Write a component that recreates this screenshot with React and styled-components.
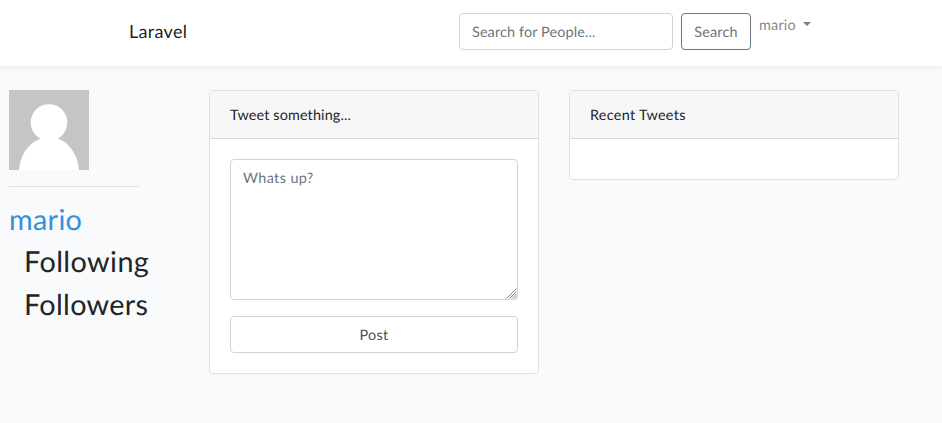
import React from "react";
import styled, { createGlobalStyle } from "styled-components";

const GlobalStyle = createGlobalStyle`
  *, *::before, *::after { box-sizing: border-box; }
  body {
    margin: 0;
    background: #f8fafc;
    color: #212529;
    font-family: Lato, "Noto Sans", sans-serif;
    font-size: 14.4px;
    line-height: 1.6;
    text-rendering: geometricPrecision;
    overflow: hidden;
  }
  input, textarea, button { text-rendering: inherit; }
`;

const Label = styled.span`
  display: inline-block;
  white-space: nowrap;
  letter-spacing: ${(p) => p.$track || 0}px;
`;

const Navbar = styled.nav`
  display: flex;
  align-items: flex-start;
  height: 66px;
  padding: 13px 130px 0 129px;
  background: #fff;
  box-shadow: 0 2px 4px rgba(0, 0, 0, 0.06);
`;

const Brand = styled.a`
  margin-top: 4px;
  font-size: 18px;
  line-height: 29px;
  color: rgba(0, 0, 0, 0.9);
`;

const SearchForm = styled.form`
  display: flex;
  gap: 8px;
  margin-left: auto;
`;

const SearchInput = styled.input`
  width: 214px;
  height: 37px;
  padding: 7px 12px 5px;
  border: 1px solid #ced4da;
  border-radius: 4px;
  background: #fff;
  font: inherit;
  letter-spacing: 0.13px;
  outline: none;
  &::placeholder { color: #6c757d; opacity: 1; }
`;

const Button = styled.button`
  width: ${(p) => (p.$block ? "100%" : "70px")};
  height: 37px;
  padding: 2px 0 0;
  border: 1px solid ${(p) => (p.$block ? "#ced4da" : "#6c757d")};
  border-radius: 4px;
  background: #fff;
  color: ${(p) => (p.$block ? "#495057" : "#6c757d")};
  font: inherit;
`;

const UserMenu = styled.a`
  display: flex;
  align-items: center;
  width: 52px;
  height: 25px;
  margin-left: 8px;
  margin-right: 1px;
  color: rgba(0, 0, 0, 0.5);
`;

const Caret = styled.span`
  margin-left: auto;
  margin-bottom: 3px;
  border-top: 4.3px solid;
  border-left: 4.3px solid transparent;
  border-right: 4.3px solid transparent;
`;

const Page = styled.main`
  display: grid;
  grid-template-columns: 170px 330px 330px;
  column-gap: 30px;
  align-items: start;
  padding: 24px 0 0 9px;
`;

const Profile = styled.aside`
  display: flex;
  flex-direction: column;
  align-items: flex-start;
`;

const Avatar = styled.svg`
  display: block;
  width: 80px;
  height: 80px;
`;

const Divider = styled.hr`
  width: 130px;
  margin: 16px 0 15.5px;
  border: 0;
  border-top: 1px solid rgba(0, 0, 0, 0.1);
`;

const ProfileHeading = styled.h2`
  margin: 0 0 8px;
  padding-left: ${(p) => (p.$link ? 0 : 15)}px;
  font-size: 28.8px;
  font-weight: 400;
  line-height: 34.56px;
  color: ${(p) => (p.$link ? "#3490dc" : "#212529")};
`;

const Card = styled.section`
  border: 1px solid #dfe0e2;
  border-radius: 4px;
  background: #fff;
  overflow: hidden;
`;

const CardHeader = styled.header`
  height: 48px;
  padding: 13px 20px 0;
  border-bottom: 1px solid #d9d9d9;
  background: #f7f7f7;
`;

const CardBody = styled.div`
  display: flex;
  flex-direction: column;
  gap: 16px;
  min-height: 40px;
  padding: 20px;
`;

const TweetField = styled.div`
  position: relative;
`;

const TweetArea = styled.textarea`
  display: block;
  width: 100%;
  height: 141px;
  padding: 7px 12px;
  border: 1px solid #ced4da;
  border-radius: 4px;
  font: inherit;
  letter-spacing: 0.4px;
  resize: none;
  outline: none;
  &::placeholder { color: #6c757d; opacity: 1; }
`;

const ResizeGrip = styled.svg`
  position: absolute;
  right: 1px;
  bottom: 1px;
  width: 11px;
  height: 11px;
  pointer-events: none;
`;

export default function App() {
  return (
    <>
      <GlobalStyle />
      <Navbar>
        <Brand><Label $track={0.3}>Laravel</Label></Brand>
        <SearchForm>
          <SearchInput placeholder="Search for People..." />
          <Button type="button"><Label $track={0.2}>Search</Label></Button>
        </SearchForm>
        <UserMenu><Label $track={0.2}>mario</Label><Caret /></UserMenu>
      </Navbar>
      <Page>
        <Profile>
          <Avatar viewBox="0 0 80 80">
            <rect width="80" height="80" fill="#c5c5c5" />
            <circle cx="40" cy="32.5" r="18.3" fill="#fff" />
            <path d="M10 80C11 66 19 53 31 49Q33 47 31 45H49Q47 47 50 49C61 53 69 66 70 80Z" fill="#fff" />
          </Avatar>
          <Divider />
          <ProfileHeading $link><Label $track={0.3}>mario</Label></ProfileHeading>
          <ProfileHeading><Label $track={0.4}>Following</Label></ProfileHeading>
          <ProfileHeading><Label $track={0.3}>Followers</Label></ProfileHeading>
        </Profile>
        <Card>
          <CardHeader><Label $track={0.14}>Tweet something...</Label></CardHeader>
          <CardBody>
            <TweetField>
              <TweetArea placeholder="Whats up?" />
              <ResizeGrip viewBox="0 0 11 11">
                <path d="M0.5 10.5L10.5 0.5M3.5 10.5L10.5 3.5M6 10.5L10.5 6M8.5 10.5L10.5 8.5" stroke="#777" strokeWidth="0.9" />
              </ResizeGrip>
            </TweetField>
            <Button type="button" $block><Label $track={0.3}>Post</Label></Button>
          </CardBody>
        </Card>
        <Card>
          <CardHeader><Label $track={0.3}>Recent Tweets</Label></CardHeader>
          <CardBody />
        </Card>
      </Page>
    </>
  );
}
